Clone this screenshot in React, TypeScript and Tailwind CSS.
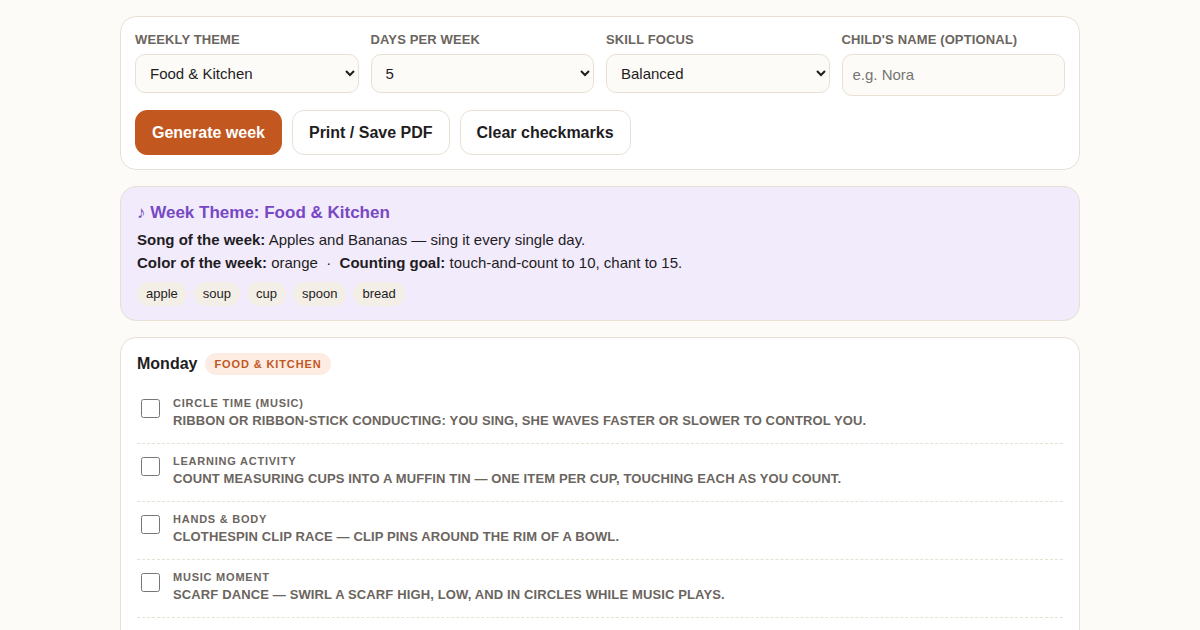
import React, { useState } from 'react';

const THEMES = ['Food & Kitchen', 'Farm Animals', 'Weather', 'Things That Go'];
const DAYS = ['5', '4', '3'];
const SKILLS = ['Balanced', 'Language', 'Motor', 'Music'];
const WORDS = ['apple', 'soup', 'cup', 'spoon', 'bread'];

interface Activity {
  id: string;
  label: string;
  text: string;
}

const ACTIVITIES: Activity[] = [
  {
    id: 'circle',
    label: 'Circle time (music)',
    text: 'Ribbon or ribbon-stick conducting: you sing, she waves faster or slower to control you.',
  },
  {
    id: 'learning',
    label: 'Learning activity',
    text: 'Count measuring cups into a muffin tin — one item per cup, touching each as you count.',
  },
  {
    id: 'hands',
    label: 'Hands & body',
    text: 'Clothespin clip race — clip pins around the rim of a bowl.',
  },
  {
    id: 'music',
    label: 'Music moment',
    text: 'Scarf dance — swirl a scarf high, low, and in circles while music plays.',
  },
];

const labelClass = 'mb-[5px] block text-[13px] leading-[18px] font-bold tracking-[0.01em] text-[#6b6560] uppercase';
const buttonClass = 'rounded-xl border px-4 py-2.5 text-base leading-[23px] font-bold';

interface SelectFieldProps {
  id: string;
  label: string;
  options: string[];
}

const SelectField: React.FC<SelectFieldProps> = ({ id, label, options }) => (
  <div>
    <label htmlFor={id} className={labelClass}>{label}</label>
    <select
      id={id}
      className="block h-[39px] w-full rounded-[10px] border border-[#e8e0d5] bg-[#fdfbf7] px-2.5 text-[15px] text-[#1f1d1f]"
    >
      {options.map((o) => (
        <option key={o}>{o}</option>
      ))}
    </select>
  </div>
);

export default function App() {
  const [done, setDone] = useState<Record<string, boolean>>({});

  return (
    <div className="min-h-screen bg-[#fdfbf7] px-4 py-4 font-['Liberation_Sans',Arial,sans-serif] text-[15px] text-[#1f1d1f]">
      <main className="mx-auto flex max-w-[960px] flex-col gap-4">
        <section className="rounded-2xl border border-[#e8e0d5] bg-white p-3.5">
          <div className="grid grid-cols-4 gap-3">
            <SelectField id="theme" label="Weekly theme" options={THEMES} />
            <SelectField id="days" label="Days per week" options={DAYS} />
            <SelectField id="skill" label="Skill focus" options={SKILLS} />
            <div>
              <label htmlFor="child" className={labelClass}>Child's name (optional)</label>
              <input
                id="child"
                type="text"
                placeholder="e.g. Nora"
                className="block h-[42px] w-full rounded-[10px] border border-[#e8e0d5] bg-[#fdfbf7] px-2.5 pb-0.5 text-[15px] placeholder:text-[#757575]"
              />
            </div>
          </div>
          <div className="mt-3.5 flex flex-wrap gap-2.5">
            <button type="button" className={`${buttonClass} border-[#c2571f] bg-[#c2571f] text-white`}>
              Generate week
            </button>
            <button type="button" onClick={() => window.print()} className={`${buttonClass} border-[#e8e0d5] bg-white`}>
              Print / Save PDF
            </button>
            <button type="button" onClick={() => setDone({})} className={`${buttonClass} border-[#e8e0d5] bg-white`}>
              Clear checkmarks
            </button>
          </div>
        </section>

        <section className="rounded-2xl border border-[#e8e0d5] bg-[#f2ebfc] px-4 py-3.5">
          <h2 className="mb-[3px] text-[17px] leading-6 font-bold text-[#7848c4]">♪ Week Theme: Food &amp; Kitchen</h2>
          <p className="leading-[23px]">
            <strong>Song of the week:</strong> Apples and Bananas — sing it every single day.
          </p>
          <p className="leading-[23px]">
            <strong>Color of the week:</strong> orange &nbsp;·&nbsp; <strong>Counting goal:</strong> touch-and-count to 10, chant to 15.
          </p>
          <ul className="mt-2 flex flex-wrap gap-[7px]">
            {WORDS.map((word) => (
              <li key={word} className="rounded-full bg-[#f4efe6] px-[9px] py-0.5 text-[13px] leading-5">{word}</li>
            ))}
          </ul>
        </section>

        <section className="rounded-2xl border border-[#e8e0d5] bg-white px-4 pt-3.5 pb-8">
          <div className="mb-2.5 flex items-center gap-2">
            <h3 className="text-base leading-6 font-bold">Monday</h3>
            <span className="rounded-full bg-[#fdece2] px-[9px] py-0.5 text-[11px] leading-[18px] font-bold tracking-[0.08em] text-[#c2571f] uppercase">
              Food &amp; Kitchen
            </span>
          </div>
          {ACTIVITIES.map(({ id, label, text }) => (
            <div key={id} className="flex items-start gap-[13px] border-b border-dashed border-[#e8e0d5] px-1 pt-[9px] pb-3.5">
              <input
                id={id}
                type="checkbox"
                checked={!!done[id]}
                onChange={() => setDone({ ...done, [id]: !done[id] })}
                className="mt-1 size-[19px] shrink-0 accent-[#c2571f]"
              />
              <label htmlFor={id} className="leading-[17px] font-bold text-[#6b6560] uppercase">
                <span className="block text-[11px] tracking-[0.07em]">{label}</span>
                <span className="block text-[13px] tracking-[0.01em]">{text}</span>
              </label>
            </div>
          ))}
        </section>
      </main>
    </div>
  );
}
